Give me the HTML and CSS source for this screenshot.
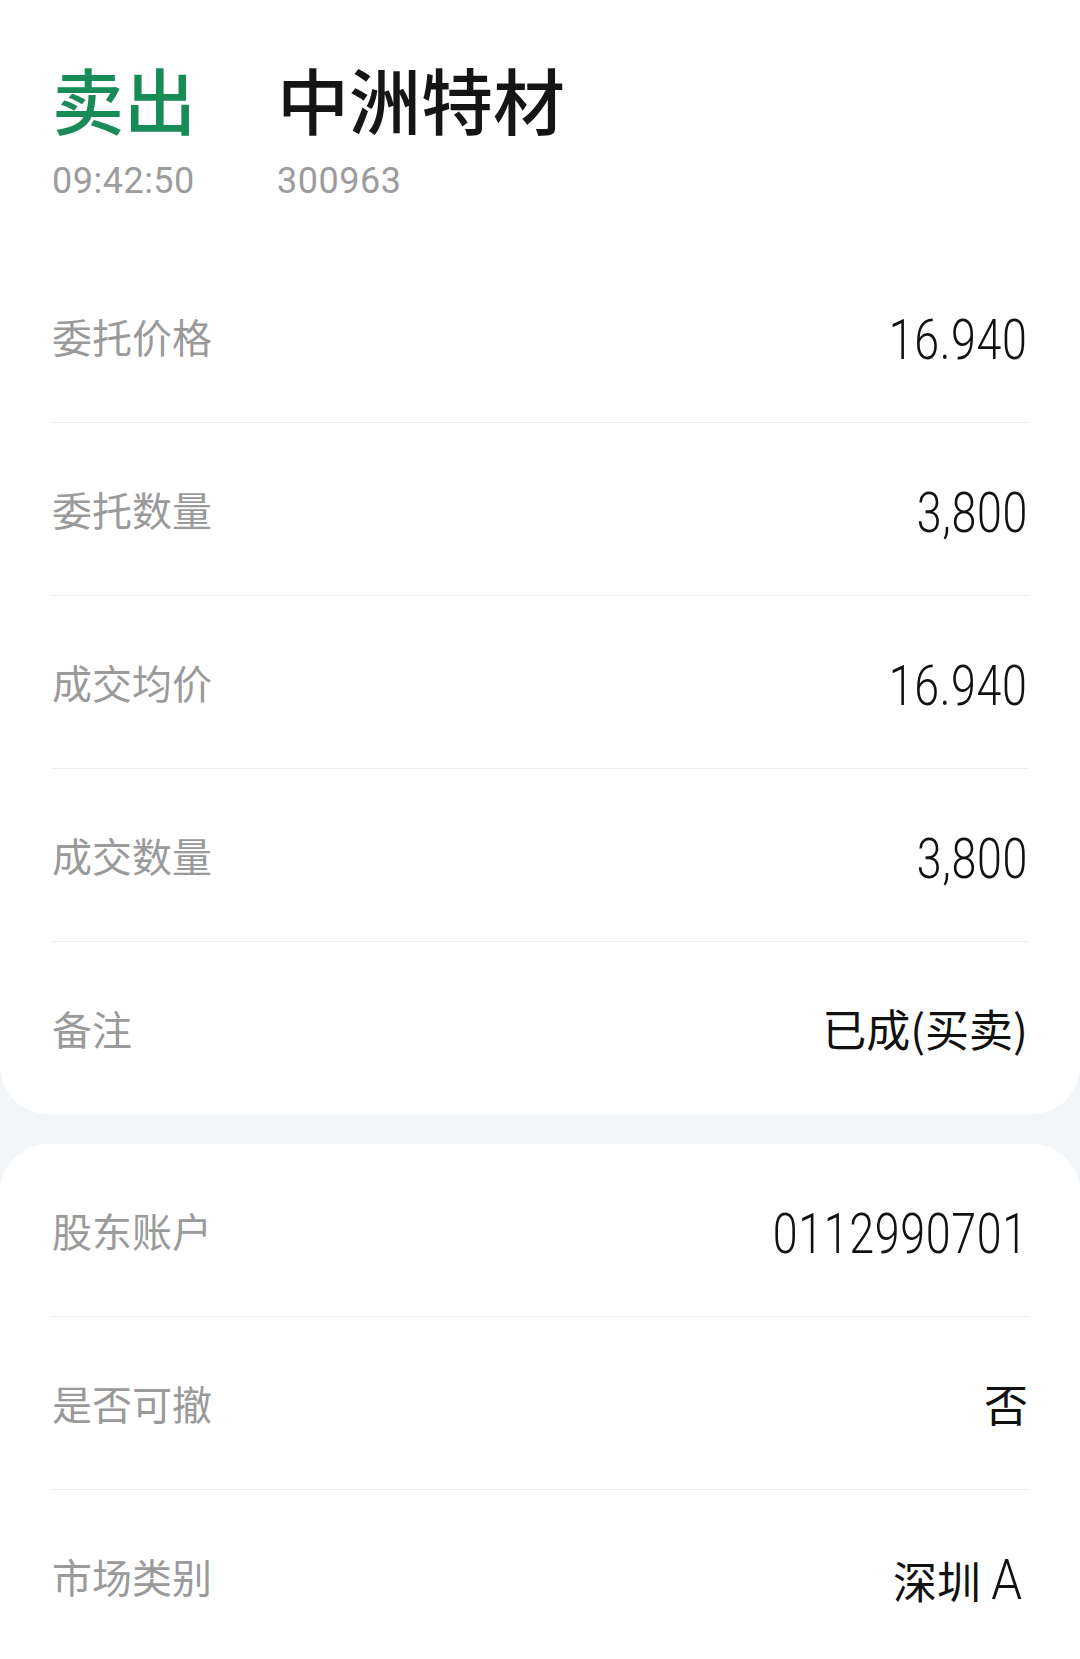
FILE: index.html
```html
<!DOCTYPE html>
<html lang="zh-CN">
<head>
    <meta charset="UTF-8">
    <meta name="viewport" content="width=device-width, initial-scale=1.0">
    <title>委托详情</title>
    <link rel="stylesheet" href="styles.css">
</head>
<body>
    <div class="card card-top">
        <div class="order-head">
            <div class="head-col side">
                <div class="head-title sell">卖出</div>
                <div class="head-sub">09:42:50</div>
            </div>
            <div class="head-col">
                <div class="head-title">中洲特材</div>
                <div class="head-sub">300963</div>
            </div>
        </div>

        <div class="row">
            <span class="label">委托价格</span>
            <span class="value"><span class="num">16.940</span></span>
        </div>
        <div class="row">
            <span class="label">委托数量</span>
            <span class="value"><span class="num">3,800</span></span>
        </div>
        <div class="row">
            <span class="label">成交均价</span>
            <span class="value"><span class="num">16.940</span></span>
        </div>
        <div class="row">
            <span class="label">成交数量</span>
            <span class="value"><span class="num">3,800</span></span>
        </div>
        <div class="row">
            <span class="label">备注</span>
            <span class="value">已成(买卖)</span>
        </div>
    </div>

    <div class="card card-bottom">
        <div class="row">
            <span class="label">股东账户</span>
            <span class="value"><span class="num">0112990701</span></span>
        </div>
        <div class="row">
            <span class="label">是否可撤</span>
            <span class="value">否</span>
        </div>
        <div class="row">
            <span class="label">市场类别</span>
            <span class="value">深圳<span class="num letter">A</span></span>
        </div>
    </div>
</body>
</html>
```

FILE: styles.css
```css
body {
    margin: 0;
    padding: 0;
    background: #f3f6f9;
    font-family: "Noto Sans CJK SC", "Noto Sans", sans-serif;
    color: #111;
}

.card {
    background: #fff;
    padding: 0 52px;
}

.card-top {
    border-radius: 0 0 48px 48px;
}

.card-bottom {
    margin-top: 30px;
    border-radius: 48px 48px 0 0;
}

/* header: side + stock name */
.order-head {
    display: flex;
    height: 250px;
    padding-top: 62px;
    box-sizing: border-box;
}

.head-col {
    display: flex;
    flex-direction: column;
    gap: 29px;
}

.head-col.side {
    width: 225px;
}

.head-title {
    font-size: 72px;
    line-height: 1;
    font-weight: 500;
    color: #151515;
}

.head-title.sell {
    color: #178c56;
}

.head-sub {
    font-family: Roboto, "Noto Sans", sans-serif;
    font-size: 36px;
    line-height: 1;
    letter-spacing: 0.5px;
    color: #9c9c9c;
}

.row {
    display: flex;
    justify-content: space-between;
    align-items: center;
    height: 172px;
    border-bottom: 1px solid #ededed;
}

.row:last-child {
    border-bottom: none;
}

.label {
    font-size: 40px;
    color: #9a9a9a;
}

.value {
    font-size: 44px;
    color: #111;
}

/* narrow figures, like the app's number font */
.num {
    display: inline-block;
    padding-top: 8px;
    font-family: Roboto, "Noto Sans", sans-serif;
    font-weight: 300;
    font-size: 56px;
    letter-spacing: 0.8px;
    transform: scaleX(0.8);
    transform-origin: right center;
}

.num.letter {
    margin-left: 6px;
    margin-right: 6px;
    letter-spacing: 0;
    transform: scaleX(0.88);
}
```
